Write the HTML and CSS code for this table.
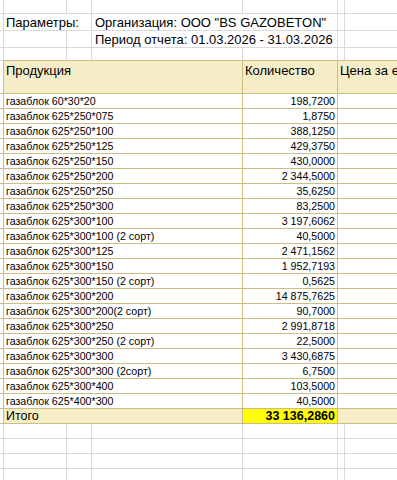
FILE: index.html
```html
<!DOCTYPE html>
<html lang="ru">
<head>
<meta charset="utf-8">
<title>Отчет</title>
<link rel="stylesheet" href="styles.css">
</head>
<body>
<div class="sheet">
  <div class="row h14"><div class="c"></div><div class="c"></div><div class="c"></div><div class="c"></div><div class="c"></div><div class="c"></div><div class="c"></div></div>
  <div class="row h17"><div class="c"></div><div class="c s12 txt">Параметры:</div><div class="c s34 txt ind">Организация: ООО "BS GAZOBETON"</div><div class="c"></div><div class="c"></div></div>
  <div class="row h17"><div class="c"></div><div class="c"></div><div class="c"></div><div class="c s34 txt ind">Период отчета: 01.03.2026 - 31.03.2026</div><div class="c"></div><div class="c"></div></div>
  <div class="row h13"><div class="c"></div><div class="c tb"></div><div class="c tb"></div><div class="c tb"></div><div class="c tb"></div><div class="c tb"></div><div class="c tb"></div></div>
  <div class="row h33 head"><div class="c t"></div><div class="c t s13 hd">Продукция</div><div class="c t hd">Количество</div><div class="c t s56 hd">Цена за единицу</div></div>

  <div class="row h15 data"><div class="c t"></div><div class="c t s13 nm">газаблок 60*30*20</div><div class="c t num">198,7200</div><div class="c t s56"></div></div>
  <div class="row h15 data"><div class="c t"></div><div class="c t s13 nm">газаблок 625*250*075</div><div class="c t num">1,8750</div><div class="c t s56"></div></div>
  <div class="row h15 data"><div class="c t"></div><div class="c t s13 nm">газаблок 625*250*100</div><div class="c t num">388,1250</div><div class="c t s56"></div></div>
  <div class="row h15 data"><div class="c t"></div><div class="c t s13 nm">газаблок 625*250*125</div><div class="c t num">429,3750</div><div class="c t s56"></div></div>
  <div class="row h15 data"><div class="c t"></div><div class="c t s13 nm">газаблок 625*250*150</div><div class="c t num">430,0000</div><div class="c t s56"></div></div>
  <div class="row h15 data"><div class="c t"></div><div class="c t s13 nm">газаблок 625*250*200</div><div class="c t num">2 344,5000</div><div class="c t s56"></div></div>
  <div class="row h15 data"><div class="c t"></div><div class="c t s13 nm">газаблок 625*250*250</div><div class="c t num">35,6250</div><div class="c t s56"></div></div>
  <div class="row h15 data"><div class="c t"></div><div class="c t s13 nm">газаблок 625*250*300</div><div class="c t num">83,2500</div><div class="c t s56"></div></div>
  <div class="row h15 data"><div class="c t"></div><div class="c t s13 nm">газаблок 625*300*100</div><div class="c t num">3 197,6062</div><div class="c t s56"></div></div>
  <div class="row h15 data"><div class="c t"></div><div class="c t s13 nm">газаблок 625*300*100 (2 сорт)</div><div class="c t num">40,5000</div><div class="c t s56"></div></div>
  <div class="row h15 data"><div class="c t"></div><div class="c t s13 nm">газаблок 625*300*125</div><div class="c t num">2 471,1562</div><div class="c t s56"></div></div>
  <div class="row h15 data"><div class="c t"></div><div class="c t s13 nm">газаблок 625*300*150</div><div class="c t num">1 952,7193</div><div class="c t s56"></div></div>
  <div class="row h15 data"><div class="c t"></div><div class="c t s13 nm">газаблок 625*300*150 (2 сорт)</div><div class="c t num">0,5625</div><div class="c t s56"></div></div>
  <div class="row h15 data"><div class="c t"></div><div class="c t s13 nm">газаблок 625*300*200</div><div class="c t num">14 875,7625</div><div class="c t s56"></div></div>
  <div class="row h15 data"><div class="c t"></div><div class="c t s13 nm">газаблок 625*300*200(2 сорт)</div><div class="c t num">90,7000</div><div class="c t s56"></div></div>
  <div class="row h15 data"><div class="c t"></div><div class="c t s13 nm">газаблок 625*300*250</div><div class="c t num">2 991,8718</div><div class="c t s56"></div></div>
  <div class="row h15 data"><div class="c t"></div><div class="c t s13 nm">газаблок 625*300*250 (2 сорт)</div><div class="c t num">22,5000</div><div class="c t s56"></div></div>
  <div class="row h15 data"><div class="c t"></div><div class="c t s13 nm">газаблок 625*300*300</div><div class="c t num">3 430,6875</div><div class="c t s56"></div></div>
  <div class="row h15 data"><div class="c t"></div><div class="c t s13 nm">газаблок 625*300*300 (2сорт)</div><div class="c t num">6,7500</div><div class="c t s56"></div></div>
  <div class="row h15 data"><div class="c t"></div><div class="c t s13 nm">газаблок 625*300*400</div><div class="c t num">103,5000</div><div class="c t s56"></div></div>
  <div class="row h15 data"><div class="c t"></div><div class="c t s13 nm">газаблок 625*400*300</div><div class="c t num">40,5000</div><div class="c t s56"></div></div>

  <div class="row h15 total"><div class="c t"></div><div class="c t s13 tl">Итого</div><div class="c t tv">33 136,2860</div><div class="c t s56"></div></div>

  <div class="row h15"><div class="c"></div><div class="c"></div><div class="c"></div><div class="c"></div><div class="c"></div><div class="c"></div><div class="c"></div></div>
  <div class="row h15"><div class="c"></div><div class="c"></div><div class="c"></div><div class="c"></div><div class="c"></div><div class="c"></div><div class="c"></div></div>
  <div class="row h15"><div class="c"></div><div class="c"></div><div class="c"></div><div class="c"></div><div class="c"></div><div class="c"></div><div class="c"></div></div>
  <div class="row h15"><div class="c"></div><div class="c"></div><div class="c"></div><div class="c"></div><div class="c"></div><div class="c"></div><div class="c"></div></div>
</div>
</body>
</html>
```

FILE: styles.css
```css
html, body {
  margin: 0;
  padding: 0;
  background: #ffffff;
  overflow: hidden;
}

body {
  width: 397px;
  height: 480px;
  font-family: "Liberation Sans", Arial, sans-serif;
  color: #000000;
}

.sheet {
  width: 420px;
}

.row {
  display: grid;
  grid-template-columns: 4px 63px 25px 151px 95px 7px 75px;
}

.h14 { height: 14px; }
.h17 { height: 17px; }
.h13 { height: 13px; }
.h33 { height: 33px; }
.h15 { height: 15px; }

.c {
  box-sizing: border-box;
  border-right: 1px solid #d9d9d9;
  border-bottom: 1px solid #d9d9d9;
  white-space: nowrap;
  overflow: hidden;
  min-width: 0;
}

.s12 { grid-column: span 2; }
.s34 { grid-column: span 2; }
.s13 { grid-column: span 3; }
.s56 { grid-column: span 2; }

.txt {
  font-size: 13px;
  line-height: 15px;
  padding-left: 2px;
  display: flex;
  align-items: flex-end;
}

.ind { padding-left: 3px; }

.tb { border-bottom-color: #cbbd84; }

.t {
  border-right-color: #cbbd84;
  border-bottom-color: #cbbd84;
}

.head .c,
.total .c {
  background: #f4edc8;
}

.head .c:first-child,
.total .c:first-child,
.data .c:first-child {
  background: #ffffff;
}

.hd {
  font-size: 13px;
  line-height: 15px;
  padding: 2px 0 0 2px;
}

.data .c {
  font-size: 10.67px;
  line-height: 14px;
}

.nm {
  padding-left: 2px;
}

.num {
  text-align: right;
  padding-right: 2px;
}

.tl {
  font-size: 12.5px;
  line-height: 14px;
  padding-left: 2px;
}

.total .tv {
  background: #ffff00;
  font-size: 12.5px;
  font-weight: bold;
  line-height: 14px;
  text-align: right;
  padding-right: 2px;
}
```
